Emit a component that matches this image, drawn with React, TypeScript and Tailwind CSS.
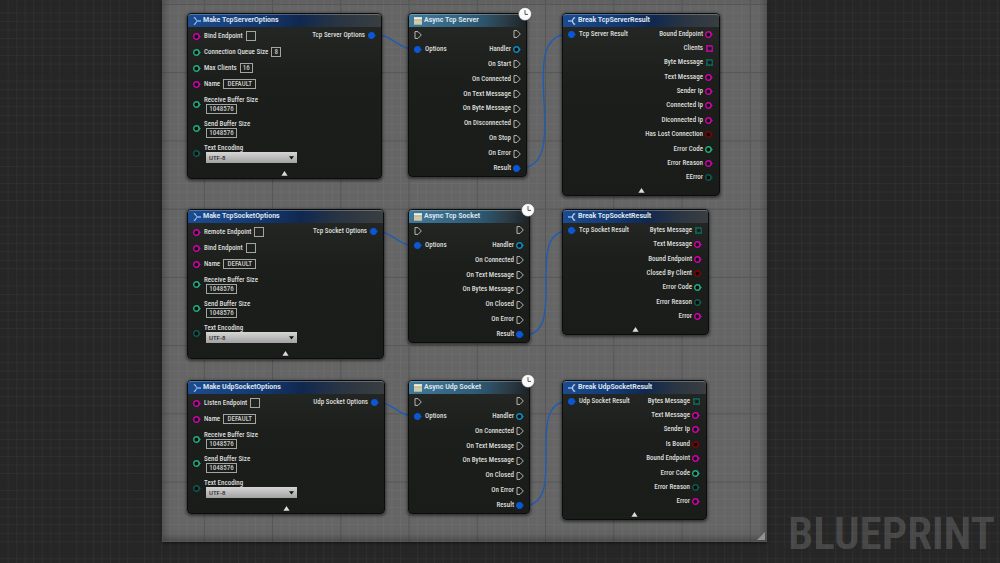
import React from "react";

type PinKind = "string" | "int" | "enum" | "bool" | "object" | "struct";

type Output = { label: string; pin: PinKind | "exec" | "stringArray" | "byteArray" };
type Field =
  | { kind: "inline"; label: string; value: string; width: string; pin: PinKind }
  | { kind: "stacked"; label: string; value: string; pin: PinKind }
  | { kind: "select"; label: string; value: string; pin: PinKind };

const PIN_COLORS: Record<PinKind, string> = {
  string: "#d400ae",
  int: "#1fae84",
  enum: "#0b5b50",
  bool: "#7c0508",
  object: "#0a8fc0",
  struct: "#0a58d6",
};

function Pin({ kind }: { kind: PinKind }) {
  const color = PIN_COLORS[kind];
  return (
    <svg className="h-[7px] w-[8px] shrink-0" viewBox="0 0 8 7" aria-hidden="true">
      <circle cx="3.4" cy="3.5" r="2.7" fill={kind === "struct" ? color : "#0a0c0b"} stroke={color} strokeWidth="1.4" />
      <path d="M5.8 1.9 L8 3.5 L5.8 5.1 Z" fill={color} />
    </svg>
  );
}

function ExecPin() {
  return (
    <svg className="h-[8px] w-[8px] shrink-0" viewBox="0 0 8 8" aria-hidden="true">
      <path d="M1 0.6 H4 L7.3 4 L4 7.4 H1 Z" fill="none" stroke="#c4c6c4" strokeWidth="0.9" strokeLinejoin="round" />
    </svg>
  );
}

function ArrayPin({ color }: { color: string }) {
  return (
    <svg className="h-[7px] w-[8px] shrink-0" viewBox="0 0 8 7" aria-hidden="true">
      <rect x="1.9" y="0.8" width="5.6" height="5.4" fill="none" stroke={color} strokeWidth="1.7" strokeDasharray="1.6 0.3" />
      <rect x="4.1" y="2.9" width="1.2" height="1.2" fill="#0a0c0b" />
    </svg>
  );
}

function OutputPin({ pin }: { pin: Output["pin"] }) {
  if (pin === "exec") return <ExecPin />;
  if (pin === "stringArray") return <ArrayPin color="#c800b0" />;
  if (pin === "byteArray") return <ArrayPin color="#0b6a5e" />;
  return <Pin kind={pin} />;
}

function MakeIcon() {
  return (
    <svg className="h-[8px] w-[8px] shrink-0" viewBox="0 0 8 8" aria-hidden="true">
      <path d="M0.8 0.8 H1.8 L3.4 3 M0.8 7.2 H1.8 L3.4 5" stroke="#b9c9e4" strokeWidth="1.1" fill="none" />
      <path d="M3 4 H8" stroke="#6f9fe6" strokeWidth="1.9" />
    </svg>
  );
}

function BreakIcon() {
  return (
    <svg className="h-[8px] w-[8px] shrink-0" viewBox="0 0 8 8" aria-hidden="true">
      <path d="M0 4 H4.6" stroke="#6f9fe6" strokeWidth="1.9" />
      <path d="M7.2 0.9 H6 L4.6 3 V5 L6 7.1 H7.2" stroke="#c3cfe2" strokeWidth="1.2" fill="none" />
    </svg>
  );
}

function AsyncIcon() {
  return (
    <svg className="h-[8px] w-[8px] shrink-0" viewBox="0 0 8 8" aria-hidden="true">
      <rect x="0" y="0.3" width="8" height="7.4" fill="#cfcaa8" />
      <rect x="0" y="0.3" width="8" height="2.3" fill="#efeee4" />
      <path d="M0 2.8 H8" stroke="#8f8b70" strokeWidth="0.5" />
    </svg>
  );
}

function Clock() {
  return (
    <svg className="absolute -top-[7px] -right-[6px] h-[14px] w-[14px]" viewBox="0 0 14 14" aria-hidden="true">
      <circle cx="7" cy="7" r="6.5" fill="#fafafa" stroke="#4a4a4a" strokeWidth="0.6" />
      <path d="M7 3.2 V7.4 H10" fill="none" stroke="#555" strokeWidth="1" />
    </svg>
  );
}

function Node({
  title,
  tone,
  icon,
  className,
  children,
}: {
  title: string;
  tone: "blue" | "teal";
  icon: React.ReactNode;
  className: string;
  children: React.ReactNode;
}) {
  const header =
    tone === "blue"
      ? "bg-[linear-gradient(100deg,#1c4c8f_0%,#143a75_35%,#10284f_58%,#2a3543_78%,#3a3e40_100%)]"
      : "bg-[linear-gradient(100deg,#41799a_0%,#366785_35%,#2c566f_62%,#2c3c46_82%,#1a2227_100%)]";
  return (
    <article
      className={`absolute flex flex-col rounded-[4px] border border-[#0b0c0c] bg-[linear-gradient(180deg,#252825_0%,#1b1e1b_40%,#1a1c1a_100%)] shadow-[0_1px_3px_1px_rgba(0,0,0,0.5)] ${className}`}
    >
      <header
        className={`flex h-[13px] shrink-0 items-center gap-[2px] rounded-t-[3px] border-t border-white/25 pb-[1px] pl-[5px] ${header}`}
      >
        {icon}
        <h2 className="font-['Roboto',sans-serif] text-[7px] leading-[9px] font-bold text-[#dfe5ec]">{title}</h2>
      </header>
      {children}
    </article>
  );
}

function Collapse() {
  return (
    <button type="button" aria-label="Collapse" className="mx-auto mt-auto flex h-[10px] w-[16px] shrink-0 items-center justify-center">
      <svg className="h-[5px] w-[7px]" viewBox="0 0 7 5" aria-hidden="true">
        <path d="M3.5 0 L6.6 4.8 H0.4 Z" fill="#dcdcdc" />
      </svg>
    </button>
  );
}

const boxClass = "h-[10px] border border-[#a3a5a3] bg-transparent text-center leading-[8px] font-medium text-[#c8cac8] outline-none";

function FieldRow({ id, field }: { id: string; field: Field }) {
  if (field.kind === "inline") {
    return (
      <div className="flex h-[16px] items-center">
        <Pin kind={field.pin} />
        <label htmlFor={id} className="mx-[3px]">
          {field.label}
        </label>
        <input id={id} defaultValue={field.value} className={`${boxClass} ${field.width}`} />
      </div>
    );
  }
  if (field.kind === "stacked") {
    return (
      <div className="flex h-[24px] items-center">
        <Pin kind={field.pin} />
        <div className="ml-[3px] flex flex-col items-start pt-[2px]">
          <label htmlFor={id} className="leading-[8px]">
            {field.label}
          </label>
          <input id={id} defaultValue={field.value} className={`${boxClass} ml-[2px] w-[31px]`} />
        </div>
      </div>
    );
  }
  return (
    <div className="flex h-[26px] items-center">
      <Pin kind={field.pin} />
      <div className="ml-[3px] flex flex-col items-start">
        <label htmlFor={id} className="leading-[8px]">
          {field.label}
        </label>
        <div className="relative ml-[2px] flex">
          <select
            id={id}
            className="h-[11px] w-[91px] appearance-none bg-linear-to-b from-[#d6d6d6] to-[#a2a2a2] pl-[3px] font-['Roboto',sans-serif] text-[6px] leading-[11px] text-[#2c2c2c]"
          >
            <option>{field.value}</option>
          </select>
          <svg className="pointer-events-none absolute top-[4px] right-[3px] h-[4px] w-[5px]" viewBox="0 0 5 4" aria-hidden="true">
            <path d="M0 0.3 H5 L2.5 3.5 Z" fill="#111" />
          </svg>
        </div>
      </div>
    </div>
  );
}

function MakeNode({ title, output, fields, className }: { title: string; output: string; fields: Field[]; className: string }) {
  return (
    <Node title={title} tone="blue" icon={<MakeIcon />} className={className}>
      <div className="flex justify-between pt-[1px] pr-[5px] pl-[5px]">
        <div className="flex flex-col">
          {fields.map((f) => (
            <FieldRow key={f.label} id={`${title}-${f.label}`.replace(/ /g, "-")} field={f} />
          ))}
        </div>
        <div className="flex h-[14px] items-center gap-[3px]">
          <span>{output}</span>
          <Pin kind="struct" />
        </div>
      </div>
      <Collapse />
    </Node>
  );
}

function Outputs({ items }: { items: Output[] }) {
  return (
    <ul className="flex flex-col">
      {items.map((o, i) => (
        <li key={i} className="flex flex-1 items-center justify-end gap-[2px]">
          <span>{o.label}</span>
          <OutputPin pin={o.pin} />
        </li>
      ))}
    </ul>
  );
}

function AsyncNode({ title, events, className }: { title: string; events: string[]; className: string }) {
  const outputs: Output[] = [
    { label: "", pin: "exec" },
    { label: "Handler", pin: "object" },
    ...events.map((label): Output => ({ label, pin: "exec" })),
    { label: "Result", pin: "struct" },
  ];
  return (
    <Node title={title} tone="teal" icon={<AsyncIcon />} className={className}>
      <Clock />
      <div className="flex flex-1 justify-between pr-[5px] pl-[5px]">
        <div className="flex flex-col">
          <div className="flex h-[15px] items-center">
            <ExecPin />
          </div>
          <div className="flex h-[15px] items-center gap-[3px]">
            <Pin kind="struct" />
            <span>Options</span>
          </div>
        </div>
        <Outputs items={outputs} />
      </div>
    </Node>
  );
}

function BreakNode({ title, input, outputs, className }: { title: string; input: string; outputs: Output[]; className: string }) {
  return (
    <Node title={title} tone="blue" icon={<BreakIcon />} className={className}>
      <div className="flex flex-1 justify-between pr-[6px] pl-[5px]">
        <div className="flex h-[14px] items-center gap-[3px]">
          <Pin kind="struct" />
          <span>{input}</span>
        </div>
        <Outputs items={outputs} />
      </div>
      <Collapse />
    </Node>
  );
}

const name: Field = { kind: "inline", label: "Name", value: "DEFAULT", width: "w-[33px]", pin: "string" };
const endpoint = (label: string): Field => ({ kind: "inline", label, value: "", width: "w-[10px]", pin: "string" });
const commonFields: Field[] = [
  name,
  { kind: "stacked", label: "Receive Buffer Size", value: "1048576", pin: "int" },
  { kind: "stacked", label: "Send Buffer Size", value: "1048576", pin: "int" },
  { kind: "select", label: "Text Encoding", value: "UTF-8", pin: "enum" },
];

const socketEvents = ["On Connected", "On Text Message", "On Bytes Message", "On Closed", "On Error"];

function Grid() {
  return (
    <svg className="pointer-events-none absolute inset-0 h-full w-full" aria-hidden="true">
      <defs>
        <pattern id="minor" x="-0.9" y="3.9" width="8.53" height="8.53" patternUnits="userSpaceOnUse">
          <path d="M0.5 0 V8.53 M0 0.5 H8.53" stroke="#ffffff" strokeOpacity="0.04" strokeWidth="1" />
        </pattern>
        <pattern id="major" x="-0.9" y="3.9" width="68.24" height="68.24" patternUnits="userSpaceOnUse">
          <path d="M0.5 0 V68.24 M0 0.5 H68.24" stroke="#000000" strokeOpacity="0.2" strokeWidth="1.1" />
        </pattern>
      </defs>
      <rect width="100%" height="100%" fill="url(#minor)" />
      <rect width="100%" height="100%" fill="url(#major)" />
    </svg>
  );
}

function Wires() {
  return (
    <svg className="pointer-events-none absolute inset-0 h-full w-full" fill="none" stroke="#1f5cb4" strokeWidth="1.4" aria-hidden="true">
      <path d="M375 34.5 C392 34.5 398 49 414 49" />
      <path d="M375 231 C392 231 398 245.5 414 245.5" />
      <path d="M375 401.5 C392 401.5 398 416 414 416" />
      <path d="M520 168 C575 168 513 34.5 568 34.5" />
      <path d="M524 335 C569 335 523 231 568 231" />
      <path d="M524 505.5 C569 505.5 523 401.5 568 401.5" />
    </svg>
  );
}

export default function App() {
  return (
    <main className="relative h-screen w-full overflow-hidden bg-[#262626] font-['Roboto_Condensed','Roboto',sans-serif] text-[7px] leading-[9px] font-medium whitespace-nowrap text-[#dcdedc]">
      <section
        aria-label="Comment"
        className="absolute top-0 left-[162px] h-[542px] w-[605px] border border-t-0 border-[#505050] bg-[#656565] shadow-[inset_0_-6px_10px_-4px_rgba(0,0,0,0.3),inset_6px_0_10px_-5px_rgba(0,0,0,0.2),inset_-6px_0_10px_-5px_rgba(0,0,0,0.2),0_1px_3px_rgba(0,0,0,0.6)]"
      >
        <svg className="absolute right-[1px] bottom-[1px] h-[8px] w-[8px]" viewBox="0 0 8 8" aria-hidden="true">
          <path d="M8 0 V8 H0 Z" fill="#929292" />
        </svg>
      </section>
      <Grid />
      <Wires />
      <p className="absolute right-[5px] bottom-[3px] text-[45px] leading-[52px] font-semibold text-white/18">BLUEPRINT</p>

      <MakeNode
        title="Make TcpServerOptions"
        output="Tcp Server Options"
        className="top-[13px] left-[187px] h-[166px] w-[195px]"
        fields={[
          endpoint("Bind Endpoint"),
          { kind: "inline", label: "Connection Queue Size", value: "8", width: "w-[10px]", pin: "int" },
          { kind: "inline", label: "Max Clients", value: "16", width: "w-[13px]", pin: "int" },
          ...commonFields,
        ]}
      />
      <AsyncNode
        title="Async Tcp Server"
        className="top-[13px] left-[408px] h-[164px] w-[119px]"
        events={["On Start", "On Connected", "On Text Message", "On Byte Message", "On Disconnected", "On Stop", "On Error"]}
      />
      <BreakNode
        title="Break TcpServerResult"
        input="Tcp Server Result"
        className="top-[13px] left-[562px] h-[183px] w-[158px]"
        outputs={[
          { label: "Bound Endpoint", pin: "string" },
          { label: "Clients", pin: "stringArray" },
          { label: "Byte Message", pin: "byteArray" },
          { label: "Text Message", pin: "string" },
          { label: "Sender Ip", pin: "string" },
          { label: "Connected Ip", pin: "string" },
          { label: "Diconnected Ip", pin: "string" },
          { label: "Has Lost Connection", pin: "bool" },
          { label: "Error Code", pin: "int" },
          { label: "Error Reason", pin: "string" },
          { label: "EError", pin: "enum" },
        ]}
      />

      <MakeNode
        title="Make TcpSocketOptions"
        output="Tcp Socket Options"
        className="top-[209px] left-[187px] h-[150px] w-[197px]"
        fields={[endpoint("Remote Endpoint"), endpoint("Bind Endpoint"), ...commonFields]}
      />
      <AsyncNode title="Async Tcp Socket" className="top-[209px] left-[408px] h-[134px] w-[122px]" events={socketEvents} />
      <BreakNode
        title="Break TcpSocketResult"
        input="Tcp Socket Result"
        className="top-[209px] left-[562px] h-[126px] w-[147px]"
        outputs={[
          { label: "Bytes Message", pin: "byteArray" },
          { label: "Text Message", pin: "string" },
          { label: "Bound Endpoint", pin: "string" },
          { label: "Closed By Client", pin: "bool" },
          { label: "Error Code", pin: "int" },
          { label: "Error Reason", pin: "enum" },
          { label: "Error", pin: "string" },
        ]}
      />

      <MakeNode
        title="Make UdpSocketOptions"
        output="Udp Socket Options"
        className="top-[380px] left-[187px] h-[134px] w-[198px]"
        fields={[endpoint("Listen Endpoint"), ...commonFields]}
      />
      <AsyncNode title="Async Udp Socket" className="top-[380px] left-[408px] h-[134px] w-[122px]" events={socketEvents} />
      <BreakNode
        title="Break UdpSocketResult"
        input="Udp Socket Result"
        className="top-[380px] left-[562px] h-[140px] w-[145px]"
        outputs={[
          { label: "Bytes Message", pin: "byteArray" },
          { label: "Text Message", pin: "string" },
          { label: "Sender Ip", pin: "string" },
          { label: "Is Bound", pin: "bool" },
          { label: "Bound Endpoint", pin: "string" },
          { label: "Error Code", pin: "int" },
          { label: "Error Reason", pin: "enum" },
          { label: "Error", pin: "string" },
        ]}
      />
    </main>
  );
}
